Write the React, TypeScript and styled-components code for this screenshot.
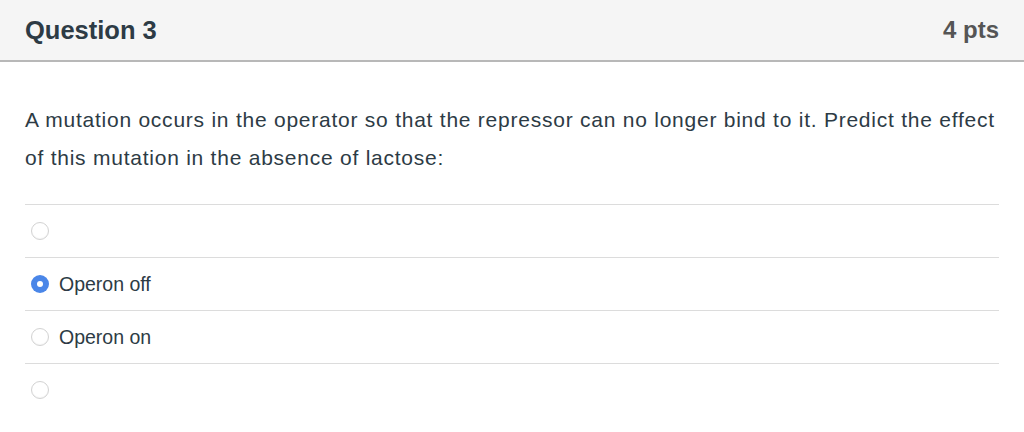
import React from "react";
import styled, { createGlobalStyle } from "styled-components";

const Global = createGlobalStyle`
  html, body { margin: 0; padding: 0; background: #ffffff; }
  body { font-family: "Liberation Sans", Arial, sans-serif; }
`;

const Page = styled.div`
  width: 1024px;
  height: 432px;
  overflow: hidden;
  background: #ffffff;
`;

const Header = styled.header`
  display: flex;
  align-items: center;
  justify-content: space-between;
  height: 60px;
  padding: 0 25px;
  background: #f5f5f5;
  border-bottom: 2px solid #b8b8b8;
`;

const Title = styled.h2`
  margin: 0;
  font-size: 25.5px;
  font-weight: 700;
  color: #2d3b45;
`;

const Points = styled.span`
  font-size: 24px;
  font-weight: 700;
  color: #555555;
`;

const Body = styled.div`
  padding: 39px 25px 0;
`;

const Prompt = styled.p`
  margin: 0 0 27px;
  font-size: 21px;
  line-height: 38px;
  letter-spacing: 0.76px;
  color: #2d3b45;
`;

const Answers = styled.ul`
  list-style: none;
  margin: 0;
  padding: 0;
  border-top: 1px solid #dcdcdc;
`;

const Answer = styled.li<{ $last?: boolean }>`
  display: flex;
  align-items: center;
  gap: 10px;
  height: 52px;
  padding-left: 6px;
  border-bottom: ${(p) => (p.$last ? "none" : "1px solid #dcdcdc")};
`;

const Radio = styled.span<{ $checked?: boolean }>`
  box-sizing: border-box;
  width: 18px;
  height: 18px;
  border-radius: 50%;
  flex-shrink: 0;
  display: flex;
  align-items: center;
  justify-content: center;
  background: ${(p) => (p.$checked ? "#4a86e8" : "#ffffff")};
  border: ${(p) => (p.$checked ? "none" : "1.5px solid #d2d2d2")};
  box-shadow: ${(p) => (p.$checked ? "none" : "inset 0 -1px 1px rgba(0,0,0,0.04)")};
`;

const Dot = styled.span`
  width: 6px;
  height: 6px;
  border-radius: 50%;
  background: #ffffff;
`;

const Label = styled.span`
  font-size: 19.5px;
  color: #2d3b45;
`;

const options = [
  { text: "", checked: false },
  { text: "Operon off", checked: true },
  { text: "Operon on", checked: false },
  { text: "", checked: false },
];

export default function App() {
  return (
    <Page>
      <Global />
      <Header>
        <Title>Question 3</Title>
        <Points>4 pts</Points>
      </Header>
      <Body>
        <Prompt>
          A mutation occurs in the operator so that the repressor can no longer bind to it. Predict the effect
          of this mutation in the absence of lactose:
        </Prompt>
        <Answers>
          {options.map((o, i) => (
            <Answer key={i} $last={i === options.length - 1}>
              <Radio $checked={o.checked}>{o.checked && <Dot />}</Radio>
              <Label>{o.text}</Label>
            </Answer>
          ))}
        </Answers>
      </Body>
    </Page>
  );
}
